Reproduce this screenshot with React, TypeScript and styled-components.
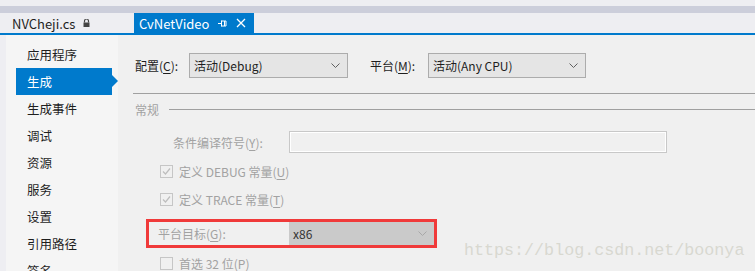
import { ReactNode } from "react";
import styled, { createGlobalStyle } from "styled-components";

const GlobalStyle = createGlobalStyle`
  html, body {
    margin: 0;
    padding: 0;
    background: #eeeef2;
  }
  body {
    font-family: "Noto Sans CJK SC", "Noto Sans", sans-serif;
    font-size: 12px;
  }
`;

const ui = `"Noto Sans CJK SC", "Noto Sans", sans-serif`;

const sideItems = ["应用程序", "生成", "生成事件", "调试", "资源", "服务", "设置", "引用路径", "签名"];

function Chevron({ color = "#606060" }: { color?: string }) {
  return (
    <svg width="9" height="5" viewBox="0 0 9 5">
      <path d="M0.5 0.5 L4.5 4.5 L8.5 0.5" fill="none" stroke={color} strokeWidth="1" />
    </svg>
  );
}

function Check({ checked }: { checked?: boolean }) {
  return (
    <CheckBox>
      {checked && (
        <svg width="11" height="11" viewBox="0 0 11 11">
          <path d="M2 5.5 L4.5 8 L9 2.5" fill="none" stroke="#bdbdbd" strokeWidth="1.2" />
        </svg>
      )}
    </CheckBox>
  );
}

function Combo({ value, width, $disabled }: { value: string; width: number; $disabled?: boolean }) {
  return (
    <ComboBox $width={width} $disabled={$disabled}>
      <span>{value}</span>
      <Chevron color={$disabled ? "#a8a8a8" : "#606060"} />
    </ComboBox>
  );
}

function Key({ children }: { children: ReactNode }) {
  return <u>{children}</u>;
}

export default function App() {
  return (
    <>
      <GlobalStyle />
      <Window>
        <TopBand />
        <TabStrip>
          <FileTab>
            NVCheji.cs
            <svg width="7" height="8" viewBox="0 0 7 8">
              <path d="M1.5 3.5 V2 a2 2 0 0 1 4 0 V3.5" fill="none" stroke="#444" strokeWidth="1.2" />
              <rect x="0.5" y="3.5" width="6" height="4.5" fill="#444" />
            </svg>
          </FileTab>
          <FileTab $active>
            CvNetVideo
            <TabIcons>
              <svg width="9" height="9" viewBox="0 0 9 9">
                <path d="M0 4.5 H3.5 M3.5 1.5 V7.5 M3.5 2 H8 V7 H3.5 M6.5 2 V7" fill="none" stroke="#fff" strokeWidth="1" />
              </svg>
              <svg width="10" height="10" viewBox="0 0 10 10">
                <path d="M1 1 L9 9 M9 1 L1 9" stroke="#fff" strokeWidth="1.3" />
              </svg>
            </TabIcons>
          </FileTab>
        </TabStrip>
        <Body>
          <Sidebar>
            {sideItems.map((s) => (
              <SideItem key={s} $selected={s === "生成"}>
                {s}
              </SideItem>
            ))}
          </Sidebar>
          <Main>
            <ConfigRow>
              <Label $width={54}>
                配置(<Key>C</Key>):
              </Label>
              <Combo value="活动(Debug)" width={159} />
              <Label $width={58} style={{ marginLeft: 22 }}>
                平台(<Key>M</Key>):
              </Label>
              <Combo value="活动(Any CPU)" width={158} />
            </ConfigRow>
            <Rule />
            <GroupHeader>常规</GroupHeader>
            <FieldRow>
              <DimLabel $width={116}>
                条件编译符号(<Key>Y</Key>):
              </DimLabel>
              <TextBox />
            </FieldRow>
            <CheckRow $top={8}>
              <Check checked />
              <span>
                定义 DEBUG 常量(<Key>U</Key>)
              </span>
            </CheckRow>
            <CheckRow $top={8}>
              <Check checked />
              <span>
                定义 TRACE 常量(<Key>T</Key>)
              </span>
            </CheckRow>
            <Highlight>
              <DimLabel $width={131} style={{ paddingLeft: 9 }}>
                平台目标(<Key>G</Key>):
              </DimLabel>
              <Combo value="x86" width={145} $disabled />
            </Highlight>
            <CheckRow $top={5}>
              <Check />
              <span>
                首选 32 位(<Key>P</Key>)
              </span>
            </CheckRow>
          </Main>
        </Body>
        <Watermark>https://blog.csdn.net/boonya</Watermark>
      </Window>
    </>
  );
}

const Window = styled.div`
  position: relative;
  width: 755px;
  height: 271px;
  overflow: hidden;
  background: #eeeef2;
  display: flex;
  flex-direction: column;
  font-family: ${ui};
  font-size: 12px;
  color: #1e1e1e;

  u {
    text-underline-offset: 2px;
  }
`;

const TopBand = styled.div`
  height: 7px;
  margin-top: 6px;
  background: #cccedb;
  flex-shrink: 0;
`;

const TabStrip = styled.div`
  display: flex;
  align-items: stretch;
  height: 20px;
  border-bottom: 2px solid #007acc;
  flex-shrink: 0;
`;

const FileTab = styled.div<{ $active?: boolean }>`
  display: flex;
  align-items: center;
  gap: 8px;
  padding: 0 6px 0 ${(p) => (p.$active ? 5 : 12)}px;
  width: ${(p) => (p.$active ? 120 : 134)}px;
  box-sizing: border-box;
  font-size: 13px;
  color: ${(p) => (p.$active ? "#ffffff" : "#1e1e1e")};
  background: ${(p) => (p.$active ? "#007acc" : "transparent")};
`;

const TabIcons = styled.div`
  display: flex;
  align-items: center;
  gap: 9px;
  margin-left: auto;
  margin-right: 2px;
`;

const Body = styled.div`
  flex: 1;
  display: flex;
  margin-left: 6px;
  background: #f0f0f0;
`;

const Sidebar = styled.div`
  width: 112px;
  flex-shrink: 0;
  padding-top: 6px;
  background: #f5f5f5;
`;

const SideItem = styled.div<{ $selected?: boolean }>`
  position: relative;
  height: 27px;
  line-height: 27px;
  margin-left: 10px;
  width: 96px;
  padding-left: 11px;
  box-sizing: border-box;
  font-size: 12.5px;
  color: ${(p) => (p.$selected ? "#ffffff" : "#1e1e1e")};
  background: ${(p) => (p.$selected ? "#007acc" : "transparent")};

  &::after {
    content: "";
    display: ${(p) => (p.$selected ? "block" : "none")};
    position: absolute;
    right: -6px;
    top: 7px;
    border-left: 6px solid #007acc;
    border-top: 6px solid transparent;
    border-bottom: 6px solid transparent;
  }
`;

const Main = styled.div`
  flex: 1;
  padding: 18px 0 0 17px;
  display: flex;
  flex-direction: column;
`;

const ConfigRow = styled.div`
  display: flex;
  align-items: center;
  height: 25px;
`;

const Label = styled.span<{ $width: number }>`
  width: ${(p) => p.$width}px;
  flex-shrink: 0;
  white-space: nowrap;
`;

const DimLabel = styled(Label)`
  color: #a2a2a2;
`;

const ComboBox = styled.div<{ $width: number; $disabled?: boolean }>`
  display: flex;
  align-items: center;
  justify-content: space-between;
  width: ${(p) => p.$width}px;
  height: ${(p) => (p.$disabled ? 23 : 25)}px;
  box-sizing: border-box;
  padding: 0 7px 0 4px;
  background: ${(p) => (p.$disabled ? "#cacaca" : "#e5e5e5")};
  border: ${(p) => (p.$disabled ? "none" : "1px solid #acacac")};
  color: ${(p) => (p.$disabled ? "#333333" : "#1e1e1e")};
  white-space: nowrap;
`;

const Rule = styled.div`
  height: 1px;
  margin: 15px 0 0 -2px;
  background: #a0a0a0;
`;

const GroupHeader = styled.div`
  display: flex;
  align-items: center;
  gap: 10px;
  height: 16px;
  margin-top: 7px;
  color: #a2a2a2;

  &::after {
    content: "";
    flex: 1;
    height: 1px;
    background: #a0a0a0;
  }
`;

const FieldRow = styled.div`
  display: flex;
  align-items: center;
  height: 22px;
  margin-top: 14px;
  padding-left: 38px;
`;

const TextBox = styled.div`
  width: 378px;
  height: 22px;
  box-sizing: border-box;
  border: 1px solid #c8c8c8;
  box-shadow: inset 0 0 0 1px #ffffff;
  background: #f0f0f0;
`;

const CheckRow = styled.div<{ $top: number }>`
  display: flex;
  align-items: center;
  gap: 6px;
  height: 20px;
  margin-top: ${(p) => p.$top}px;
  padding-left: 25px;
  color: #a2a2a2;
  white-space: nowrap;
`;

const CheckBox = styled.span`
  display: flex;
  align-items: center;
  justify-content: center;
  width: 13px;
  height: 13px;
  box-sizing: border-box;
  border: 1px solid #c6c6c6;
  background: #f0f0f0;
`;

const Highlight = styled.div`
  display: flex;
  align-items: center;
  width: 291px;
  height: 29px;
  box-sizing: border-box;
  margin: 10px 0 0 11px;
  border: 3px solid #f03a3a;
  background: #f0f0f0;
`;

const Watermark = styled.div`
  position: absolute;
  left: 464px;
  top: 241px;
  font-family: "Liberation Mono", monospace;
  font-size: 16.7px;
  color: #d8d8d0;
  white-space: nowrap;
`;
